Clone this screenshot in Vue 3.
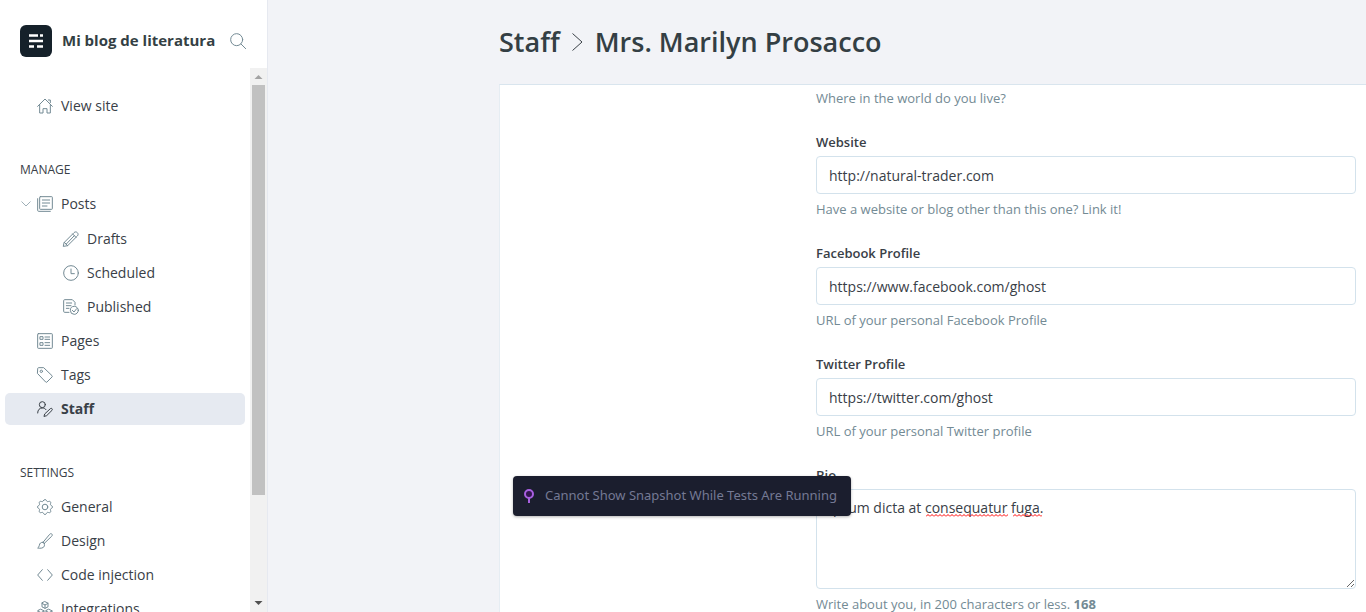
<script setup>
import { ref } from 'vue'

const icons = {
  house: '<path d="M1 12.5 12 1.5l11 11M4 10v12.5h5V16h6v6.5h5V10M17 3h3v4"/>',
  posts: '<rect x="4" y="1" width="19" height="19" rx="1"/><path d="M1 4v17.5c0 1 .5 1.500 1.500 1.500H20M8 6h11M8 10.500h11M8 15h7"/>',
  pencil: '<path d="m2 17 14.500-14.500c1.500-1.500 3.500-1.500 5 0s1.500 3.500 0 5L7 22l-6 1zM2 17l5 5M14.500 4.500l5 5M5 19.500 17 7"/>',
  clock: '<circle cx="12" cy="12" r="11"/><path d="M12 6v7h5"/>',
  published: '<path d="M9 20H2.500C1.500 20 1 19.500 1 18.500v-16C1 1.500 1.500 1 2.500 1H14l4 4v4M5 6h8M5 10h7M5 14h4"/><circle cx="17" cy="17" r="6"/><path d="m14 17 2.500 2.500 4-5"/>',
  pages: '<rect x="1" y="1" width="22" height="22" rx="1"/><path d="M5 5.500h4v4H5zM5 14.500h4v4H5zM12 6h7M12 9.500h7M12 14.500h7M12 18.500h7"/>',
  tag: '<path d="M1 2.500C1 1.500 1.500 1 2.500 1H10l12.500 12c.700.700.700 1.300 0 2L15 22.500c-.700.700-1.300.700-2 0L1 10z"/><circle cx="6.500" cy="6.500" r="1.800"/>',
  staff: '<circle cx="8" cy="5.500" r="4.500"/><path d="M1 18c0-5 3-7.500 7-7.500 2.500 0 4.500 1 5.500 2.500M12 19l8-7.500c2-1.500 4 .700 2.500 2.500l-8 8-3.500 1z"/>',
  gear: '<circle cx="12" cy="12" r="4.200"/><path d="M9.800 2.300c.700-2 3.700-2 4.400 0 .400 1.500 1.900 2.100 3.200 1.400 2-1 4 1 3 3-.700 1.300-.100 2.800 1.300 3.200 2 .700 2 3.500 0 4.200-1.400.400-2 1.900-1.300 3.200 1 2-1 4-3 3-1.300-.700-2.800-.100-3.200 1.400-.700 2-3.700 2-4.400 0-.400-1.500-1.900-2.100-3.200-1.400-2 1-4-1-3-3 .700-1.300.100-2.800-1.300-3.200-2-.700-2-3.500 0-4.200 1.400-.400 2-1.900 1.300-3.200-1-2 1-4 3-3 1.300.700 2.800.100 3.200-1.400z"/>',
  brush: '<path d="M9 14 19 2c1.200-1.300 2.400-1.300 3.300-.400s.900 2.100-.300 3.300L11 15.500M9 14c-3.500-.300-5 1.500-5.500 4.500-.300 2-1 3-2.500 4 4 .800 9 .500 10-3 .500-1.800 0-3-.500-4zM9 14l2.500 2"/>',
  code: '<path d="M8 4 1 12l7 8M16 4l7 8-7 8"/>',
  blocks: '<path d="m12 1 4.500 2.200v5.600L12 11 7.500 8.800V3.200zM7.500 3.500 12 6l4.500-2.500M12 6v5M6 12.500l4.500 2.200v5.600L6 22.500l-4.500-2.200v-5.600zM1.500 15 6 17.500l4.500-2.500M6 17.500v5M18 12.500l4.500 2.200v5.600L18 22.500l-4.500-2.200v-5.600zM13.500 15l4.500 2.500 4.500-2.500M18 17.500v5"/>'
}

const manage = [
  {
    label: 'Posts',
    icon: 'posts',
    children: [
      { label: 'Drafts', icon: 'pencil' },
      { label: 'Scheduled', icon: 'clock' },
      { label: 'Published', icon: 'published' }
    ]
  },
  { label: 'Pages', icon: 'pages' },
  { label: 'Tags', icon: 'tag' },
  { label: 'Staff', icon: 'staff', active: true }
]

const settings = [
  { label: 'General', icon: 'gear' },
  { label: 'Design', icon: 'brush' },
  { label: 'Code injection', icon: 'code' },
  { label: 'Integrations', icon: 'blocks' }
]

const fields = ref([
  { id: 'website', label: 'Website', value: 'http://natural-trader.com', hint: 'Have a website or blog other than this one? Link it!' },
  { id: 'facebook', label: 'Facebook Profile', value: 'https://www.facebook.com/ghost', hint: 'URL of your personal Facebook Profile' },
  { id: 'twitter', label: 'Twitter Profile', value: 'https://twitter.com/ghost', hint: 'URL of your personal Twitter profile' }
])

const bio = ref('Ipsum dicta at consequatur fuga.')
</script>

<template>
  <div class="app">
    <aside class="sidebar">
      <header class="brand">
        <svg class="logo" viewBox="0 0 32 32" aria-hidden="true">
          <rect width="32" height="32" rx="6" fill="#15212a" />
          <path d="M9 10.500h9M20 10.500h3M9 16h14M9 21.500h5M17 21.500h6" stroke="#fff" stroke-width="2.600" />
        </svg>
        <span class="brand-name">Mi blog de literatura</span>
        <button class="search" type="button" aria-label="Search">
          <svg class="icon" viewBox="0 0 24 24"><circle cx="10" cy="10" r="9" /><path d="m16.500 16.500 7 7" /></svg>
        </button>
      </header>

      <div class="side-body">
        <nav class="nav">
          <ul class="menu">
            <li><a class="item" href="#"><svg class="icon" viewBox="0 0 24 24" v-html="icons.house" /><span>View site</span></a></li>
          </ul>

          <h2 class="section">MANAGE</h2>
          <ul class="menu">
            <li v-for="item in manage" :key="item.label" class="entry">
              <button v-if="item.children" class="toggle" type="button" aria-label="Collapse posts">
                <svg viewBox="0 0 10 6"><path d="m.500.500 4.500 4.500L9.500.500" /></svg>
              </button>
              <a class="item" :class="{ active: item.active }" href="#">
                <svg class="icon" viewBox="0 0 24 24" v-html="icons[item.icon]" /><span>{{ item.label }}</span>
              </a>
              <ul v-if="item.children" class="menu submenu">
                <li v-for="child in item.children" :key="child.label">
                  <a class="item sub" href="#">
                    <svg class="icon" viewBox="0 0 24 24" v-html="icons[child.icon]" /><span>{{ child.label }}</span>
                  </a>
                </li>
              </ul>
            </li>
          </ul>

          <h2 class="section">SETTINGS</h2>
          <ul class="menu">
            <li v-for="item in settings" :key="item.label">
              <a class="item" href="#"><svg class="icon" viewBox="0 0 24 24" v-html="icons[item.icon]" /><span>{{ item.label }}</span></a>
            </li>
          </ul>
        </nav>
        <div class="scrollbar" aria-hidden="true">
          <svg class="arrow" viewBox="0 0 17 17"><path d="M4.500 11 8.500 7l4 4z" fill="#a3a3a3" /></svg>
          <div class="track"><div class="thumb"></div></div>
          <svg class="arrow" viewBox="0 0 17 17"><path d="m4.500 6 4 4 4-4z" fill="#505050" /></svg>
        </div>
      </div>
    </aside>

    <main class="main">
      <h1 class="title">
        <a href="#">Staff</a>
        <svg class="chevron" viewBox="0 0 11 18" aria-hidden="true"><path d="m.500.500 9.500 8.500-9.500 8.500" /></svg>
        <span>Mrs. Marilyn Prosacco</span>
      </h1>

      <form class="panel" @submit.prevent>
        <div class="form">
          <p class="hint">Where in the world do you live?</p>
          <div v-for="field in fields" :key="field.id" class="field">
            <label :for="field.id">{{ field.label }}</label>
            <input :id="field.id" v-model="field.value" type="text" spellcheck="false" />
            <p class="hint">{{ field.hint }}</p>
          </div>
          <div class="field">
            <label for="bio">Bio</label>
            <div class="bio-box">
              <textarea id="bio" v-model="bio" spellcheck="false"></textarea>
              <svg class="squiggle first" aria-hidden="true">
                <defs>
                  <pattern id="wave" width="4" height="3" patternUnits="userSpaceOnUse">
                    <path d="M0 2.500 2 .500l2 2" fill="none" stroke="#f00" />
                  </pattern>
                </defs>
                <rect width="100%" height="3" fill="url(#wave)" />
              </svg>
              <svg class="squiggle second" aria-hidden="true"><rect width="100%" height="3" fill="url(#wave)" /></svg>
            </div>
            <p class="hint">Write about you, in 200 characters or less. <b>168</b></p>
          </div>
        </div>
      </form>
    </main>

    <div class="toast" role="status">
      <svg class="pin" viewBox="0 0 10 14" aria-hidden="true">
        <path d="M5 9v5" stroke="#a85fe0" stroke-width="2" />
        <circle cx="5" cy="5" r="4" fill="#32154f" stroke="#a85fe0" stroke-width="2" />
      </svg>
      <span>Cannot Show Snapshot While Tests Are Running</span>
    </div>
  </div>
</template>

<style>
body {
  margin: 0;
}
</style>

<style scoped>
.app {
  display: flex;
  height: 100vh;
  overflow: hidden;
  background: #f2f3f7;
  color: #394047;
  font-family: "Open Sans", "Noto Sans", sans-serif;
  font-size: 14px;
}

.app *,
.app *::before {
  box-sizing: border-box;
}

.sidebar {
  display: flex;
  flex: none;
  flex-direction: column;
  width: 268px;
  border-right: 1px solid #e6e9f0;
  background: #fff;
}

.brand {
  display: flex;
  align-items: center;
  padding: 25px 21px 11px 20px;
}

.logo {
  width: 32px;
  height: 32px;
  margin-right: 10px;
}

.brand-name {
  flex: 1;
  padding-bottom: 2px;
  color: #343f44;
  font-size: 15px;
  font-weight: 700;
  white-space: nowrap;
}

button {
  padding: 0;
  border: 0;
  background: none;
}

.search {
  display: flex;
}

.icon {
  flex: none;
  width: 16px;
  height: 16px;
  overflow: visible;
  fill: none;
  stroke: #738a94;
  stroke-width: 1.5px;
  stroke-linecap: round;
  stroke-linejoin: round;
}

.side-body {
  display: flex;
  flex: 1;
  min-height: 0;
}

.nav {
  flex: 1;
  overflow: hidden;
  padding: 22px 5px 0;
}

.menu {
  display: flex;
  flex-direction: column;
  gap: 2px;
  margin: 0;
  padding: 0;
  list-style: none;
}

.entry {
  position: relative;
}

.item {
  display: flex;
  align-items: center;
  gap: 8px;
  height: 32px;
  padding-left: 32px;
  border-radius: 5px;
  color: #394047;
  text-decoration: none;
}

.item span {
  padding-bottom: 1px;
}

.item.sub {
  padding-left: 58px;
}

.submenu {
  margin-top: 3px;
}

.item.active {
  background: #e6eaf1;
  font-weight: 700;
}

.item.active .icon {
  stroke: #394047;
}

.toggle {
  position: absolute;
  top: 0;
  left: 16px;
  display: flex;
  align-items: center;
  height: 32px;
}

.toggle svg {
  width: 10px;
  height: 6px;
  overflow: visible;
  fill: none;
  stroke: #9fb0b8;
}

.section {
  margin: 38px 0 8px 15px;
  font-size: 12px;
  font-weight: 500;
  line-height: 20px;
}

.scrollbar {
  display: flex;
  flex: none;
  flex-direction: column;
  width: 17px;
  background: #f1f1f1;
}

.arrow {
  width: 17px;
  height: 17px;
}

.track {
  flex: 1;
  padding: 0 2px;
}

.thumb {
  height: 80.4%;
  background: #c1c1c1;
}

.main {
  display: flex;
  flex: 1;
  flex-direction: column;
  min-width: 0;
  padding-left: 231px;
}

.title {
  display: flex;
  align-items: center;
  height: 84px;
  margin: 0;
  padding-bottom: 2px;
  color: #343f44;
  font-size: 27px;
  font-weight: 600;
  white-space: nowrap;
}

.title a {
  color: inherit;
  text-decoration: none;
}

.chevron {
  width: 11px;
  height: 18px;
  margin: 2px 12px 0;
  fill: none;
  stroke: #394047;
}

.panel {
  flex: 1;
  min-height: 0;
  overflow: hidden;
  border-top: 1px solid #d9e5ee;
  border-left: 1px solid #e6edf3;
  background: #fff;
}

.form {
  padding: 3px 10px 0 316px;
}

.hint {
  margin: 0;
  color: #738a94;
  font-size: 13px;
  line-height: 20px;
}

.field {
  margin-top: 24px;
}

.field label {
  display: block;
  margin-bottom: 4px;
  font-size: 13px;
  font-weight: 600;
  line-height: 20px;
}

.field input,
.field textarea {
  display: block;
  width: 100%;
  height: 38px;
  margin: 0;
  padding: 0 12px;
  border: 1px solid #d3e2ec;
  border-radius: 4px;
  outline: 0;
  background: #fff;
  color: #394047;
  font: inherit;
}

.field textarea {
  height: 100px;
  padding: 8px 12px;
  line-height: 20px;
  resize: vertical;
}

.field .hint {
  margin-top: 5px;
}

.bio-box {
  position: relative;
}

.squiggle {
  position: absolute;
  top: 25px;
  height: 3px;
}

.squiggle.first {
  left: 110px;
  width: 82px;
}

.squiggle.second {
  left: 197px;
  width: 29px;
}

.toast {
  position: absolute;
  top: 476px;
  left: 513px;
  display: flex;
  align-items: center;
  gap: 11px;
  height: 40px;
  padding: 0 14px 0 11px;
  border-radius: 4px;
  background: #1b1e2e;
  box-shadow: 0 1px 3px rgba(0, 0, 0, 0.3);
  color: #747994;
  font-family: "Noto Sans", "Open Sans", sans-serif;
  font-size: 13px;
  white-space: nowrap;
}

.toast span {
  padding-bottom: 2px;
}

.pin {
  width: 10px;
  height: 14px;
}
</style>
